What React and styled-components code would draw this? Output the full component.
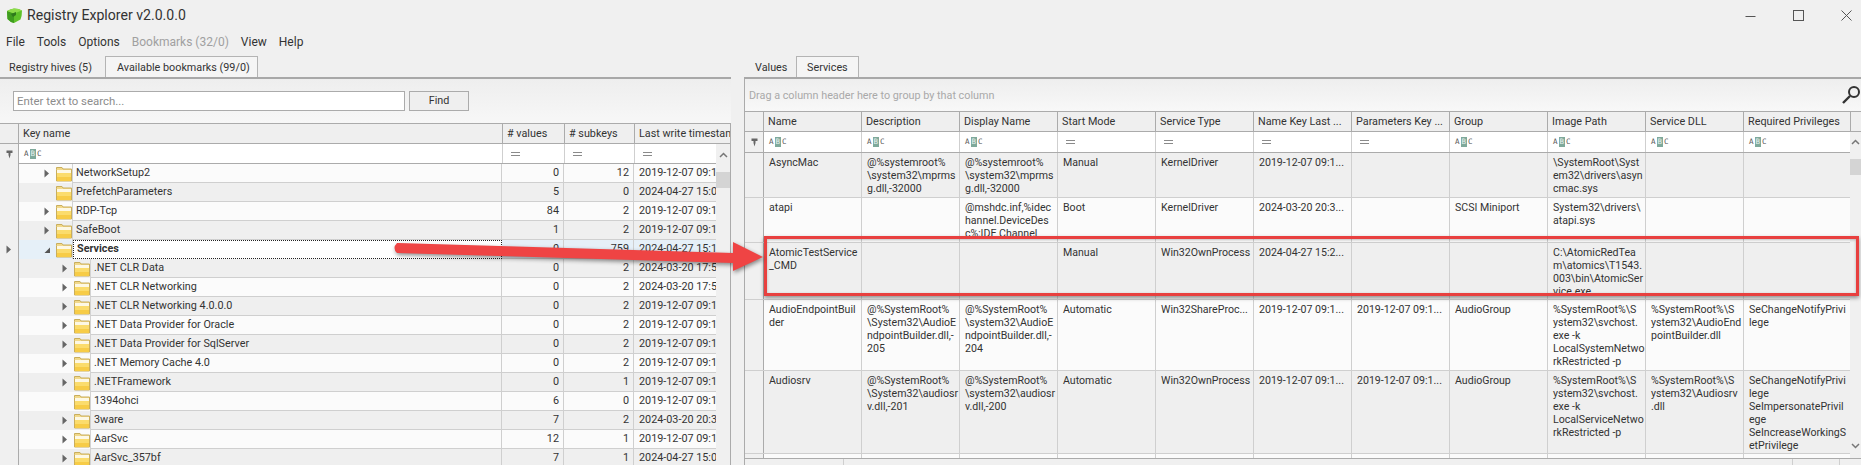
import styled, { createGlobalStyle } from "styled-components";

const GlobalStyle = createGlobalStyle`
    html, body {
        margin: 0;
        padding: 0;
        background: #f0f0f0;
    }
`;

const Window = styled.div`
    position: relative;
    width: 1861px;
    height: 465px;
    overflow: hidden;
    background: #f0f0f0;
    color: #333;
    font-family: Roboto, "Liberation Sans", sans-serif;
    font-size: 10.8px;
`;

const TitleBar = styled.header`
    display: flex;
    align-items: center;
    height: 30px;
    padding-left: 6px;
    gap: 4px;
`;

const TitleText = styled.h1`
    margin: 0;
    flex: 1;
    font-size: 14.1px;
    font-weight: 400;
`;

const WindowControls = styled.div`
    display: flex;
    gap: 18px;
`;

const WindowButton = styled.button`
    display: flex;
    align-items: center;
    justify-content: center;
    width: 30px;
    height: 30px;
    padding: 0;
    border: 0;
    background: none;
`;

const MenuBar = styled.nav`
    display: flex;
    align-items: center;
    gap: 12px;
    height: 24px;
    padding-left: 6px;
    font-size: 12px;
`;

const MenuItem = styled.span`
    color: ${p => (p.$disabled ? "#a0a0a0" : "#333")};
`;

const Panels = styled.div`
    display: flex;
    height: 411px;
    gap: 13px;
`;

const Panel = styled.section`
    display: flex;
    flex-direction: column;
    flex: ${p => (p.$grow ? "1" : "none")};
    width: ${p => (p.$grow ? "auto" : "731px")};
    min-width: 0;
`;

const TabStrip = styled.div`
    display: flex;
    flex: none;
    height: 25px;
    box-sizing: border-box;
    border-bottom: 2px solid #a8a8a8;
`;

const Tab = styled.div`
    display: flex;
    align-items: center;
    box-sizing: border-box;
    width: ${p => p.$w}px;
    padding-left: ${p => p.$pad}px;
    margin-top: 2px;
    background: ${p => (p.$active ? "#f5f5f5" : "transparent")};
    border: 1px solid ${p => (p.$active ? "#b4b4b4" : "transparent")};
    border-bottom: 0;
    border-left-width: ${p => (p.$active ? "1px" : "0")};
`;

const SearchBar = styled.div`
    display: flex;
    flex: none;
    align-items: flex-start;
    gap: 4px;
    height: 44px;
    padding: 12px 0 0 13px;
    box-sizing: border-box;
    background: linear-gradient(#eeeeee, #f7f7f7);
`;

const SearchInput = styled.div`
    width: 392px;
    height: 20px;
    box-sizing: border-box;
    padding-left: 3px;
    font-size: 11.4px;
    line-height: 18px;
    background: #fff;
    border: 1px solid #ababab;
    color: #8c8c8c;
`;

const FindButton = styled.div`
    width: 60px;
    height: 20px;
    box-sizing: border-box;
    line-height: 18px;
    text-align: center;
    background: #efefef;
    border: 1px solid #ababab;
`;

const LeftGrid = styled.div`
    display: flex;
    flex-direction: column;
    flex: 1;
    min-height: 0;
    border-right: 1px solid #ababab;
`;

const RightGrid = styled.div`
    display: flex;
    flex-direction: column;
    flex: 1;
    min-height: 0;
    border-left: 1px solid #ababab;
`;

const GroupPanel = styled.div`
    display: flex;
    flex: none;
    align-items: center;
    justify-content: space-between;
    height: 32px;
    padding-left: 4px;
    background: linear-gradient(#eeeeee, #f8f8f8);
    color: #a9a9a9;
`;

const HeadRow = styled.div`
    display: flex;
    flex: none;
    height: 19px;
    background: #efefef;
    border-top: 1px solid #ababab;
    border-bottom: 1px solid #ababab;
`;

const HeadCell = styled.div`
    flex: none;
    width: ${p => p.$w}px;
    box-sizing: border-box;
    padding-left: 4px;
    line-height: 19px;
    white-space: nowrap;
    overflow: hidden;
    border-right: 1px solid #ababab;
`;

const GridBody = styled.div`
    display: flex;
    flex: 1;
    min-height: 0;
`;

const RowStack = styled.div`
    flex: 1;
    min-width: 0;
    overflow: hidden;
`;

const FilterRow = styled.div`
    display: flex;
    height: ${p => p.$h}px;
    background: #fff;
    border-bottom: 1px solid #ababab;
`;

const HandleColumn = styled.div`
    flex: none;
    width: 19px;
    box-sizing: border-box;
    background: #f0f0f0;
    border-right: 1px solid #ababab;
`;

const HandleSlot = styled.div`
    display: flex;
    align-items: center;
    justify-content: center;
    height: ${p => p.$h}px;
    margin-top: ${p => p.$gap || 0}px;
`;

const Indicator = styled.div`
    display: flex;
    flex: none;
    align-items: center;
    justify-content: center;
    width: 19px;
    box-sizing: border-box;
    background: #f0f0f0;
    border-right: 1px solid #ababab;
`;

const FilterCell = styled.div`
    display: flex;
    flex: none;
    align-items: center;
    width: ${p => p.$w}px;
    box-sizing: border-box;
    padding-left: 5px;
    border-right: 1px solid #cfcfcf;
`;

const AbcBadge = styled.span`
    display: inline-flex;
    align-items: center;
    height: 10px;
    font-family: "DejaVu Sans Mono", monospace;
    font-size: 7.5px;
    line-height: 10px;
    color: #555;
`;

const AbcMiddle = styled.span`
    padding: 0 1px;
    margin: 0 1px;
    background: #7fa99b;
    color: #e8f2ee;
`;

const EqualsMark = styled.span`
    display: block;
    width: 9px;
    height: 2px;
    margin-left: 3px;
    border-top: 1px solid #8a8a8a;
    border-bottom: 1px solid #8a8a8a;
`;

const TreeRow = styled.div`
    display: flex;
    height: 19px;
    background: ${p => (p.$selected ? "#e6f0f8" : p.$alt ? "#efefef" : "#fbfbfb")};
`;

const TreeIndent = styled.div`
    display: flex;
    flex: none;
    align-items: center;
    width: ${p => p.$level * 18 + 36}px;
    box-sizing: border-box;
    padding-left: ${p => p.$level * 18 + 6}px;
    border-right: 1px solid #d2d2d2;
`;

const Expander = styled.span`
    display: flex;
    flex: none;
    align-items: center;
    width: 13px;
`;

const KeyName = styled.div`
    flex: 1;
    box-sizing: border-box;
    padding-left: 3px;
    line-height: 18px;
    white-space: nowrap;
    border-right: 1px solid #cfcfcf;
    border-bottom: 1px solid #cfcfcf;
    ${p =>
        p.$selected &&
        `
        background: #fff;
        font-weight: 700;
        border: 1px dotted #222;
        line-height: 16px;
    `}
`;

const NumCell = styled.div`
    flex: none;
    width: ${p => p.$w}px;
    box-sizing: border-box;
    padding-right: 4px;
    text-align: right;
    line-height: 18px;
    border-right: 1px solid #cfcfcf;
    border-bottom: 1px solid #cfcfcf;
`;

const StampCell = styled.div`
    flex: none;
    width: ${p => p.$w}px;
    box-sizing: border-box;
    padding-left: 5px;
    line-height: 18px;
    white-space: nowrap;
    overflow: hidden;
    border-bottom: 1px solid #cfcfcf;
`;

const ScrollTrack = styled.div`
    flex: none;
    width: ${p => p.$w}px;
    padding-top: ${p => p.$top}px;
    background: #f0f0f0;
`;

const ScrollThumb = styled.div`
    height: 16px;
    margin-top: 14px;
    background: #d4d4d4;
`;

const ArrowSlot = styled.span`
    display: flex;
    justify-content: center;
    margin-top: ${p => p.$gap || 0}px;
`;

const DataRow = styled.div`
    display: flex;
    height: ${p => p.$h}px;
    box-sizing: border-box;
    overflow: hidden;
    border-bottom: 1px solid #cfcfcf;
`;

const RowHandle = styled.div`
    flex: none;
    width: 19px;
    box-sizing: border-box;
    background: #f0f0f0;
    border-right: 1px solid #ababab;
`;

const DataCell = styled.div`
    flex: none;
    width: ${p => p.$w}px;
    box-sizing: border-box;
    padding: 3px 0 0 5px;
    font-size: 10.6px;
    line-height: 13px;
    white-space: pre;
    overflow: hidden;
    background: ${p => (p.$alt ? "#efefef" : "#fbfbfb")};
    border-right: 1px solid #cfcfcf;
`;

const GridFooter = styled.div`
    display: flex;
    flex: none;
    height: 6px;
    border-top: 1px solid #ababab;
    background: #f0f0f0;
`;

const FooterPart = styled.div`
    flex: none;
    width: ${p => p.$w}px;
    border-right: 1px solid #cfcfcf;
`;

const RedBox = styled.div`
    position: absolute;
    left: 764px;
    top: 236px;
    width: 1095px;
    height: 60px;
    box-sizing: border-box;
    border: 3px solid #e8403f;
    box-shadow: 0 2px 4px rgba(0, 0, 0, 0.4), inset 0 1px 3px rgba(0, 0, 0, 0.25);
    pointer-events: none;
`;

const CalloutArrow = styled.svg`
    position: absolute;
    left: 385px;
    top: 235px;
    filter: drop-shadow(1px 2px 2px rgba(0, 0, 0, 0.45));
    pointer-events: none;
`;

const leftCols = { key: 484, values: 62, subkeys: 70, stamp: 82 };
const colW = 98;
const lastW = 107;

const treeRows = [
    { name: "NetworkSetup2", level: 1, values: 0, subkeys: 12, stamp: "2019-12-07 09:14:5" },
    { name: "PrefetchParameters", level: 1, leaf: true, values: 5, subkeys: 0, stamp: "2024-04-27 15:06" },
    { name: "RDP-Tcp", level: 1, values: 84, subkeys: 2, stamp: "2019-12-07 09:14:5" },
    { name: "SafeBoot", level: 1, values: 1, subkeys: 2, stamp: "2019-12-07 09:14:5" },
    { name: "Services", level: 1, open: true, selected: true, values: 0, subkeys: 759, stamp: "2024-04-27 15:14" },
    { name: ".NET CLR Data", level: 2, values: 0, subkeys: 2, stamp: "2024-03-20 17:55" },
    { name: ".NET CLR Networking", level: 2, values: 0, subkeys: 2, stamp: "2024-03-20 17:55" },
    { name: ".NET CLR Networking 4.0.0.0", level: 2, values: 0, subkeys: 2, stamp: "2019-12-07 09:14:5" },
    { name: ".NET Data Provider for Oracle", level: 2, values: 0, subkeys: 2, stamp: "2019-12-07 09:14:5" },
    { name: ".NET Data Provider for SqlServer", level: 2, values: 0, subkeys: 2, stamp: "2019-12-07 09:14:5" },
    { name: ".NET Memory Cache 4.0", level: 2, values: 0, subkeys: 2, stamp: "2019-12-07 09:14:5" },
    { name: ".NETFramework", level: 2, values: 0, subkeys: 1, stamp: "2019-12-07 09:14:5" },
    { name: "1394ohci", level: 2, leaf: true, values: 6, subkeys: 0, stamp: "2019-12-07 09:14:5" },
    { name: "3ware", level: 2, values: 7, subkeys: 2, stamp: "2024-03-20 20:33" },
    { name: "AarSvc", level: 2, values: 12, subkeys: 1, stamp: "2019-12-07 09:14:5" },
    { name: "AarSvc_357bf", level: 2, values: 7, subkeys: 1, stamp: "2024-04-27 15:06" },
];

const serviceHeads = [
    "Name", "Description", "Display Name", "Start Mode", "Service Type", "Name Key Last ...",
    "Parameters Key ...", "Group", "Image Path", "Service DLL", "Required Privileges",
];

const filterKinds = ["abc", "abc", "abc", "eq", "eq", "eq", "eq", "abc", "abc", "abc", "abc"];

const serviceRows = [
    {
        h: 45,
        cells: [
            "AsyncMac",
            "@%systemroot%\n\\system32\\mprms\ng.dll,-32000",
            "@%systemroot%\n\\system32\\mprms\ng.dll,-32000",
            "Manual", "KernelDriver", "2019-12-07 09:1...", "", "",
            "\\SystemRoot\\Syst\nem32\\drivers\\asyn\ncmac.sys", "", "",
        ],
    },
    {
        h: 45,
        cells: [
            "atapi", "",
            "@mshdc.inf,%idec\nhannel.DeviceDes\nc%;IDE Channel",
            "Boot", "KernelDriver", "2024-03-20 20:3...", "", "SCSI Miniport",
            "System32\\drivers\\\natapi.sys", "", "",
        ],
    },
    {
        h: 57,
        cells: [
            "AtomicTestService\n_CMD", "", "", "Manual", "Win32OwnProcess", "2024-04-27 15:2...", "", "",
            "C:\\AtomicRedTea\nm\\atomics\\T1543.\n003\\bin\\AtomicSer\nvice.exe", "", "",
        ],
    },
    {
        h: 71,
        cells: [
            "AudioEndpointBuil\nder",
            "@%SystemRoot%\n\\System32\\AudioE\nndpointBuilder.dll,-\n205",
            "@%SystemRoot%\n\\system32\\AudioE\nndpointBuilder.dll,-\n204",
            "Automatic", "Win32ShareProc...", "2019-12-07 09:1...", "2019-12-07 09:1...", "AudioGroup",
            "%SystemRoot%\\S\nystem32\\svchost.\nexe -k\nLocalSystemNetwo\nrkRestricted -p",
            "%SystemRoot%\\S\nystem32\\AudioEnd\npointBuilder.dll",
            "SeChangeNotifyPrivi\nlege",
        ],
    },
    {
        h: 83,
        cells: [
            "Audiosrv",
            "@%SystemRoot%\n\\System32\\audiosr\nv.dll,-201",
            "@%SystemRoot%\n\\system32\\audiosr\nv.dll,-200",
            "Automatic", "Win32OwnProcess", "2019-12-07 09:1...", "2019-12-07 09:1...", "AudioGroup",
            "%SystemRoot%\\S\nystem32\\svchost.\nexe -k\nLocalServiceNetwo\nrkRestricted -p",
            "%SystemRoot%\\S\nystem32\\Audiosrv\n.dll",
            "SeChangeNotifyPrivi\nlege\nSeImpersonatePrivil\nege\nSeIncreaseWorkingS\netPrivilege",
        ],
    },
    {
        h: 60,
        cells: [
            "autotimesvc", "@%SystemRoot%", "@%SystemRoot%", "Manual", "Win32OwnProcess",
            "2019-12-07 09:1...", "2019-12-07 09:1...", "", "%SystemRoot%\\S", "%SystemRoot%\\S", "SeChangeNotifyPrivi",
        ],
    },
];

const widthOf = i => (i === serviceHeads.length - 1 ? lastW : colW);

function AppLogo() {
    return (
        <svg width="17" height="17" viewBox="0 0 17 17">
            <path d="M8 1.5 Q13 1.5 16 3.5 Q16 9 14.5 12.5 L8 16 Q4 15 1.5 12 L1 4 Q4 2 8 1.5 Z" fill="#5fc22a" />
            <path d="M1 4 L8 6.5 L8 16 Q4 15 1.5 12 Z" fill="#3f9c1f" />
            <path d="M8 1.5 Q13 1.5 16 3.5 L8 6.5 L1 4 Q4 2 8 1.5 Z" fill="#8ddc4a" />
            <path d="M5 7 L10 5 L10 8 L7 10 Z" fill="#2f7a1c" />
        </svg>
    );
}

function FolderIcon() {
    return (
        <svg width="16" height="16" viewBox="0 0 16 16">
            <path d="M0.5 3.5 V1.5 H6 L7 3 H15.5 V15 H0.5 Z" fill="#f2d98a" stroke="#c9ae5c" />
            <rect x="1" y="4" width="14" height="3" fill="#fdf8e4" />
            <rect x="1" y="7" width="14" height="8" fill="#fbdc6c" />
            <rect x="1" y="11" width="14" height="4" fill="#f7cc47" />
        </svg>
    );
}

function ExpandArrow({ open }) {
    return open ? (
        <svg width="8" height="8" viewBox="0 0 8 8">
            <path d="M7 1.5 V7 H1.5 Z" fill="#555" />
        </svg>
    ) : (
        <svg width="8" height="9" viewBox="0 0 8 9">
            <path d="M1.5 0.5 L6 4.5 L1.5 8.5 Z" fill="#666" />
        </svg>
    );
}

function FilterPin() {
    return (
        <svg width="7" height="9" viewBox="0 0 7 9">
            <path d="M0.5 0.5 H6.5 V3 H4.5 V5 L3.5 8.5 L2.5 5 V3 H0.5 Z" fill="#666" />
        </svg>
    );
}

function AbcIcon() {
    return (
        <AbcBadge>
            A<AbcMiddle>B</AbcMiddle>C
        </AbcBadge>
    );
}

function ScrollArrow({ down }) {
    return (
        <svg width="9" height="6" viewBox="0 0 9 6">
            <path d={down ? "M1 1 L4.5 4.5 L8 1" : "M1 5 L4.5 1.5 L8 5"} fill="none" stroke="#777" strokeWidth="1.5" />
        </svg>
    );
}

function TreeGrid() {
    return (
        <LeftGrid>
            <HeadRow>
                <HeadCell $w={19} />
                <HeadCell $w={leftCols.key}>Key name</HeadCell>
                <HeadCell $w={leftCols.values}># values</HeadCell>
                <HeadCell $w={leftCols.subkeys}># subkeys</HeadCell>
                <HeadCell $w={96}>Last write timestamp</HeadCell>
            </HeadRow>
            <GridBody>
                <HandleColumn>
                    <HandleSlot $h={20}>
                        <FilterPin />
                    </HandleSlot>
                    <HandleSlot $h={19} $gap={76}>
                        <ExpandArrow />
                    </HandleSlot>
                </HandleColumn>
                <RowStack>
                    <FilterRow $h={19}>
                        <FilterCell $w={leftCols.key}>
                            <AbcIcon />
                        </FilterCell>
                        <FilterCell $w={leftCols.values}>
                            <EqualsMark />
                        </FilterCell>
                        <FilterCell $w={leftCols.subkeys}>
                            <EqualsMark />
                        </FilterCell>
                        <FilterCell $w={leftCols.stamp}>
                            <EqualsMark />
                        </FilterCell>
                    </FilterRow>
                    {treeRows.map((row, i) => (
                        <TreeRow key={row.name} $alt={i % 2 === 1} $selected={row.selected}>
                            <TreeIndent $level={row.level}>
                                <Expander>{!row.leaf && <ExpandArrow open={row.open} />}</Expander>
                                <FolderIcon />
                            </TreeIndent>
                            <KeyName $selected={row.selected}>{row.name}</KeyName>
                            <NumCell $w={leftCols.values}>{row.values}</NumCell>
                            <NumCell $w={leftCols.subkeys}>{row.subkeys}</NumCell>
                            <StampCell $w={leftCols.stamp}>{row.stamp}</StampCell>
                        </TreeRow>
                    ))}
                </RowStack>
                <ScrollTrack $w={14} $top={8}>
                    <ArrowSlot>
                        <ScrollArrow />
                    </ArrowSlot>
                    <ScrollThumb />
                </ScrollTrack>
            </GridBody>
        </LeftGrid>
    );
}

function ServicesGrid() {
    return (
        <RightGrid>
            <GroupPanel>
                Drag a column header here to group by that column
                <svg width="20" height="20" viewBox="0 0 20 20">
                    <circle cx="13" cy="7" r="5" fill="none" stroke="#333" strokeWidth="2" />
                    <path d="M9 11 L2 18" stroke="#333" strokeWidth="2.4" />
                </svg>
            </GroupPanel>
            <HeadRow>
                <HeadCell $w={19} />
                {serviceHeads.map((head, i) => (
                    <HeadCell key={head} $w={widthOf(i)}>
                        {head}
                    </HeadCell>
                ))}
            </HeadRow>
            <GridBody>
                <RowStack>
                    <FilterRow $h={20}>
                        <Indicator>
                            <FilterPin />
                        </Indicator>
                        {filterKinds.map((kind, i) => (
                            <FilterCell key={serviceHeads[i]} $w={widthOf(i)}>
                                {kind === "abc" ? <AbcIcon /> : <EqualsMark />}
                            </FilterCell>
                        ))}
                    </FilterRow>
                    {serviceRows.map((row, r) => (
                        <DataRow key={row.cells[0]} $h={row.h}>
                            <RowHandle />
                            {row.cells.map((cell, i) => (
                                <DataCell key={serviceHeads[i]} $w={widthOf(i)} $alt={r % 2 === 0}>
                                    {cell}
                                </DataCell>
                            ))}
                        </DataRow>
                    ))}
                </RowStack>
                <ScrollTrack $w={11} $top={7}>
                    <ArrowSlot>
                        <ScrollArrow />
                    </ArrowSlot>
                    <ScrollThumb />
                    <ArrowSlot $gap={268}>
                        <ScrollArrow down />
                    </ArrowSlot>
                </ScrollTrack>
            </GridBody>
            <GridFooter>
                <FooterPart $w={98} />
                <FooterPart $w={948} />
                <FooterPart $w={46} />
            </GridFooter>
        </RightGrid>
    );
}

export default function App() {
    return (
        <Window>
            <GlobalStyle />
            <TitleBar>
                <AppLogo />
                <TitleText>Registry Explorer v2.0.0.0</TitleText>
                <WindowControls>
                    <WindowButton aria-label="Minimize">
                        <svg width="11" height="11" viewBox="0 0 11 11">
                            <path d="M0.5 6.5 H10.5" stroke="#555" />
                        </svg>
                    </WindowButton>
                    <WindowButton aria-label="Maximize">
                        <svg width="11" height="11" viewBox="0 0 11 11">
                            <rect x="0.5" y="0.5" width="10" height="10" fill="none" stroke="#555" />
                        </svg>
                    </WindowButton>
                    <WindowButton aria-label="Close">
                        <svg width="11" height="11" viewBox="0 0 11 11">
                            <path d="M0.5 0.5 L10.5 10.5 M10.5 0.5 L0.5 10.5" stroke="#555" />
                        </svg>
                    </WindowButton>
                </WindowControls>
            </TitleBar>
            <MenuBar>
                <MenuItem>File</MenuItem>
                <MenuItem>Tools</MenuItem>
                <MenuItem>Options</MenuItem>
                <MenuItem $disabled>Bookmarks (32/0)</MenuItem>
                <MenuItem>View</MenuItem>
                <MenuItem>Help</MenuItem>
            </MenuBar>
            <Panels>
                <Panel>
                    <TabStrip>
                        <Tab $w={105} $pad={9}>Registry hives (5)</Tab>
                        <Tab $w={153} $pad={11} $active>Available bookmarks (99/0)</Tab>
                    </TabStrip>
                    <SearchBar>
                        <SearchInput>Enter text to search...</SearchInput>
                        <FindButton>Find</FindButton>
                    </SearchBar>
                    <TreeGrid />
                </Panel>
                <Panel $grow>
                    <TabStrip>
                        <Tab $w={52} $pad={11}>Values</Tab>
                        <Tab $w={63} $pad={10} $active>Services</Tab>
                    </TabStrip>
                    <ServicesGrid />
                </Panel>
            </Panels>
            <RedBox />
            <CalloutArrow width="385" height="42" viewBox="0 0 385 42">
                <path
                    d="M12 8 L348 18 L348 7 L378 22 L348 36 L348 28 L12 18 Q7 13 12 8 Z"
                    fill="#ef4444"
                />
            </CalloutArrow>
        </Window>
    );
}
